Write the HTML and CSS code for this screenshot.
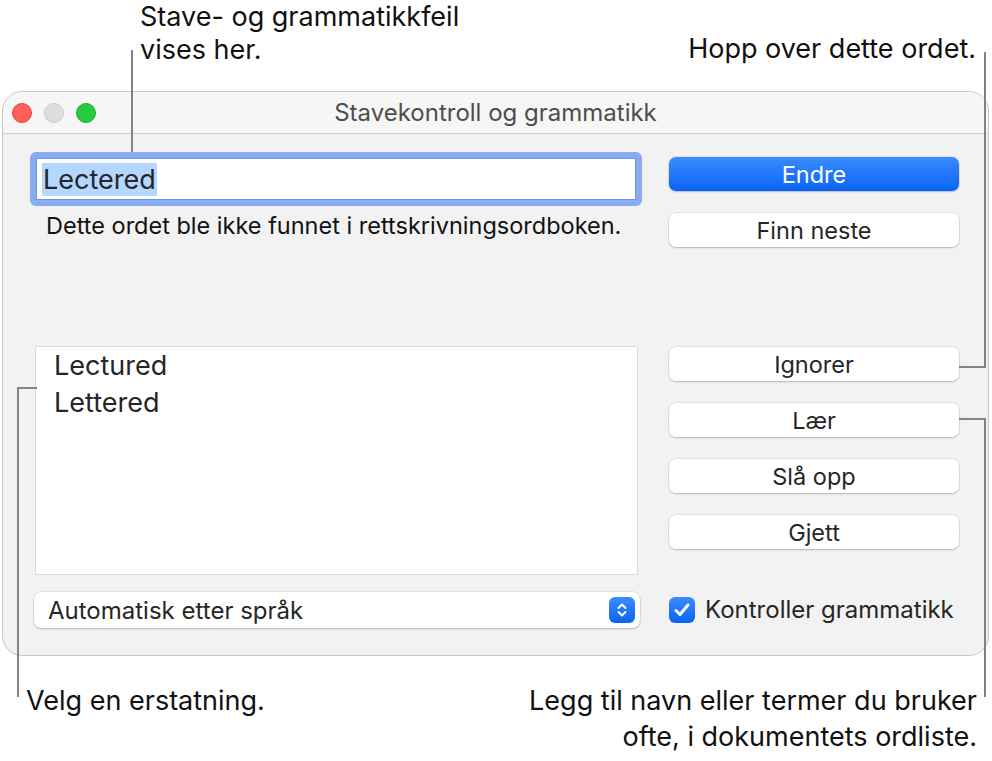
FILE: index.html
```html
<!DOCTYPE html>
<html lang="nb">
<head>
    <meta charset="UTF-8">
    <title>Stavekontroll og grammatikk</title>
    <link rel="stylesheet" href="styles.css">
</head>
<body>
    <div class="page">
        <header class="notes notes-top">
            <p class="note note-errors">Stave- og grammatikkfeil<br>vises her.</p>
            <p class="note note-skip">Hopp over dette ordet.</p>
        </header>

        <div class="window">
            <div class="titlebar">
                <div class="lights">
                    <span class="light light-close"></span>
                    <span class="light light-min"></span>
                    <span class="light light-zoom"></span>
                </div>
                <div class="title">Stavekontroll og grammatikk</div>
                <div></div>
            </div>

            <div class="panel">
                <div class="col-left">
                    <div class="field-ring">
                        <div class="field"><span class="selected">Lectered</span></div>
                    </div>
                    <p class="message">Dette ordet ble ikke funnet i rettskrivningsordboken.</p>
                    <ul class="guesses">
                        <li>Lectured</li>
                        <li>Lettered</li>
                    </ul>
                    <div class="popup">
                        <span>Automatisk etter språk</span>
                        <span class="stepper">
                            <svg width="14" height="18" viewBox="0 0 14 18">
                                <path d="M3.5 7 L7 3.5 L10.5 7 M3.5 11 L7 14.5 L10.5 11" fill="none" stroke="#fff" stroke-width="2" stroke-linecap="round" stroke-linejoin="round"/>
                            </svg>
                        </span>
                    </div>
                </div>

                <div class="col-right">
                    <button class="btn btn-primary">Endre</button>
                    <button class="btn">Finn neste</button>
                    <div class="btn-group">
                        <button class="btn">Ignorer</button>
                        <button class="btn">Lær</button>
                        <button class="btn">Slå opp</button>
                        <button class="btn">Gjett</button>
                    </div>
                    <label class="check">
                        <span class="check-box">
                            <svg width="18" height="16" viewBox="0 0 18 16">
                                <path d="M3 8.5 L7 12.5 L15 3" fill="none" stroke="#fff" stroke-width="3" stroke-linecap="round" stroke-linejoin="round"/>
                            </svg>
                        </span>
                        Kontroller grammatikk
                    </label>
                </div>
            </div>
        </div>

        <footer class="notes notes-bottom">
            <p class="note note-pick">Velg en erstatning.</p>
            <p class="note note-learn">Legg til navn eller termer du bruker<br>ofte, i dokumentets ordliste.</p>
        </footer>

        <!-- callout lines -->
        <div class="leader leader-errors"></div>
        <div class="leader leader-skip"></div>
        <div class="leader leader-learn"></div>
        <div class="leader leader-pick"></div>
    </div>
</body>
</html>
```

FILE: styles.css
```css
:root {
    --ui-text: #262626;
    --line: #838383;
}

body {
    margin: 0;
    background: white;
    font-family: "Inter", "Noto Sans", sans-serif;
    color: #111;
}

p {
    margin: 0;
}

.page {
    position: relative;
    width: 992px;
    height: 761px;
}

/* annotations */

.notes {
    display: flex;
    justify-content: space-between;
    align-items: flex-start;
}

.notes-top {
    height: 91px;
}

.note {
    font-size: 27px;
    line-height: 36px;
}

.note-errors {
    margin: 0 0 0 140px;
    line-height: 33px;
}

.note-skip {
    margin: 32px 16px 0 0;
    line-height: 33px;
}

.notes-bottom {
    padding-top: 27px;
}

.note-pick {
    margin-left: 26px;
}

.note-learn {
    margin-right: 15px;
    text-align: right;
}

.leader {
    position: absolute;
    border: 0 solid var(--line);
}

.leader-errors {
    left: 131px;
    top: 50px;
    height: 102px;
    border-left-width: 2px;
}

.leader-skip {
    left: 959px;
    top: 52px;
    width: 25px;
    height: 314px;
    border-right-width: 2px;
    border-bottom-width: 2px;
}

.leader-learn {
    left: 959px;
    top: 418px;
    width: 25px;
    height: 277px;
    border-top-width: 2px;
    border-right-width: 2px;
}

.leader-pick {
    left: 17px;
    top: 387px;
    width: 18px;
    height: 308px;
    border-top-width: 2px;
    border-left-width: 2px;
}

/* window */

.window {
    box-sizing: border-box;
    width: 987px;
    height: 565px;
    margin-left: 2px;
    background: #f2f2f2;
    border: 1px solid #c6c6c6;
    border-radius: 20px;
    overflow: hidden;
}

.titlebar {
    display: grid;
    grid-template-columns: 1fr auto 1fr;
    align-items: center;
    height: 41px;
    background: #f6f6f6;
    border-bottom: 1px solid #d2d2d2;
}

.lights {
    display: flex;
    gap: 12px;
    padding-left: 9px;
}

.light {
    box-sizing: border-box;
    width: 20px;
    height: 20px;
    border-radius: 50%;
}

.light-close {
    background: #fe5f57;
    border: 1px solid #e2463f;
}

.light-min {
    background: #dddddd;
    border: 1px solid #cbcbcb;
}

.light-zoom {
    background: #28c840;
    border: 1px solid #1eab31;
}

.title {
    font-size: 24px;
    color: #4d4d4d;
}

.panel {
    display: flex;
    gap: 27px;
    padding: 18px 28px 0 27px;
}

.col-left {
    width: 612px;
}

.field-ring {
    padding: 6px;
    background: #88acf1;
    border-radius: 6px;
}

.field {
    box-sizing: border-box;
    height: 42px;
    padding: 4px 5px 0;
    background: white;
    border: 1px solid #6e97e8;
    font-size: 27px;
    line-height: 33px;
    color: var(--ui-text);
}

.selected {
    display: inline-block;
    padding: 0 1px;
    background: #b3d7ff;
}

.message {
    margin: 6px 0 0 16px;
    font-size: 23.5px;
    line-height: 28px;
    color: #111;
}

.guesses {
    box-sizing: border-box;
    height: 229px;
    margin: 106px 4px 0 5px;
    padding: 0 0 0 18px;
    list-style: none;
    background: white;
    border: 1px solid #dcdcdc;
    font-size: 27px;
    line-height: 37px;
    color: var(--ui-text);
}

.popup {
    display: flex;
    justify-content: space-between;
    align-items: center;
    box-sizing: border-box;
    height: 36px;
    margin: 17px 2px 0 4px;
    padding: 0 5px 0 14px;
    background: white;
    border-radius: 7px;
    box-shadow: 0 1px 2px rgba(0, 0, 0, 0.2), 0 0 0 0.5px rgba(0, 0, 0, 0.12);
    font-size: 24px;
    color: var(--ui-text);
}

.stepper {
    display: flex;
    align-items: center;
    justify-content: center;
    width: 26px;
    height: 26px;
    border-radius: 6px;
    background: linear-gradient(#3b8cff, #0a63f5);
}

.col-right {
    display: flex;
    flex-direction: column;
    width: 290px;
    padding-top: 5px;
}

.btn {
    height: 34px;
    padding: 0;
    border: none;
    border-radius: 7px;
    background: white;
    box-shadow: 0 1px 2px rgba(0, 0, 0, 0.2), 0 0 0 0.5px rgba(0, 0, 0, 0.1);
    font-family: inherit;
    font-size: 23.5px;
    color: var(--ui-text);
}

.btn + .btn {
    margin-top: 22px;
}

.btn-primary {
    background: linear-gradient(#3a8bff, #0a63f6);
    color: white;
}

.btn-group {
    display: flex;
    flex-direction: column;
    margin-top: 100px;
}

.check {
    display: flex;
    align-items: center;
    gap: 10px;
    margin-top: 46px;
    font-size: 24px;
    color: var(--ui-text);
}

.check-box {
    display: flex;
    align-items: center;
    justify-content: center;
    width: 26px;
    height: 26px;
    border-radius: 6px;
    background: linear-gradient(#3b8cff, #0a63f5);
}
```
